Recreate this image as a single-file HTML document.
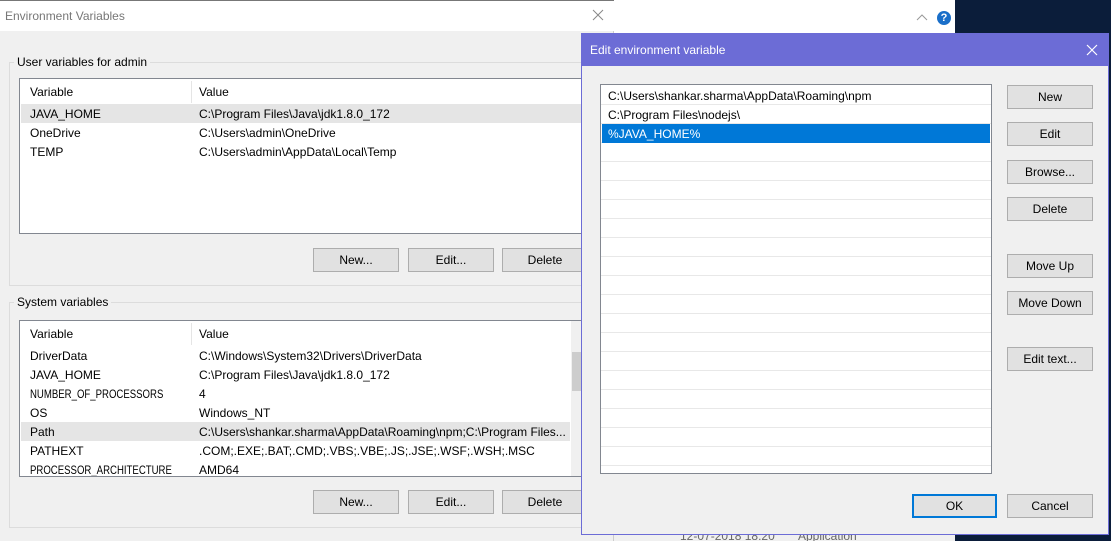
<!DOCTYPE html>
<html><head><meta charset="utf-8"><style>
*{box-sizing:border-box;margin:0;padding:0}
html,body{width:1111px;height:541px;overflow:hidden}
body{position:relative;background:#0b1d3a;font-family:"Liberation Sans",sans-serif;font-size:12px;color:#000}
.abs{position:absolute}
.btn{position:absolute;background:#e1e1e1;border:1px solid #adadad;text-align:center;line-height:22px;height:24px;font-size:12px}
.t{position:absolute;white-space:nowrap;line-height:19px;top:0}
.row{position:absolute;left:1px;right:1px;height:19px}
.n{transform:scaleX(.8);transform-origin:left}
</style></head><body>
<div class="abs" style="left:614px;top:0;width:341px;height:541px;background:#fff"></div>
<div class="abs" style="left:614px;top:520px;width:341px;height:21px;background:#f0f0f0"></div>
<div class="t" style="left:680px;top:527px;color:#666">12-07-2018 18:20</div>
<div class="t" style="left:798px;top:527px;color:#666">Application</div>
<svg class="abs" style="left:916px;top:14px" width="12" height="8"><path d="M1 6 L6 1 L11 6" stroke="#999" fill="none"/></svg>
<div class="abs" style="left:937px;top:11px;width:14px;height:14px;border-radius:50%;background:#1a6fc9;color:#fff;font-weight:bold;font-size:11px;text-align:center;line-height:14px">?</div>
<!-- left window -->
<div class="abs" style="left:0;top:0;width:614px;height:541px;background:#f0f0f0;border-right:1px solid #ccc"></div>
<div class="abs" style="left:0;top:0;width:614px;height:31px;background:#fff;border-top:1px solid #777"></div>
<div class="t" style="left:5px;top:7px;color:#777">Environment Variables</div>
<svg class="abs" style="left:592px;top:9px" width="12" height="12"><path d="M1 1L11 11M11 1L1 11" stroke="#888" stroke-width="1"/></svg>
<div class="abs" style="left:9px;top:62px;width:620px;height:224px;border:1px solid #dcdcdc"></div>
<div class="t" style="left:14px;top:53px;background:#f0f0f0;padding:0 3px">User variables for admin</div>
<div class="abs" style="left:19px;top:78px;width:600px;height:156px;background:#fff;border:1px solid #828790">
 <div class="abs" style="left:171px;top:2px;width:1px;height:22px;background:#e5e5e5"></div>
 <div class="t" style="left:10px;top:4px">Variable</div><div class="t" style="left:179px;top:4px">Value</div>
 <div class="row" style="top:25px;background:#e5e5e5"></div>
 <div class="t" style="left:10px;top:26px">JAVA_HOME</div><div class="t" style="left:179px;top:26px">C:\Program Files\Java\jdk1.8.0_172</div>
 <div class="t" style="left:10px;top:45px">OneDrive</div><div class="t" style="left:179px;top:45px">C:\Users\admin\OneDrive</div>
 <div class="t" style="left:10px;top:64px">TEMP</div><div class="t" style="left:179px;top:64px">C:\Users\admin\AppData\Local\Temp</div>
</div>
<div class="btn" style="left:313px;top:248px;width:86px">New...</div>
<div class="btn" style="left:408px;top:248px;width:86px">Edit...</div>
<div class="btn" style="left:502px;top:248px;width:86px">Delete</div>
<div class="abs" style="left:9px;top:302px;width:620px;height:226px;border:1px solid #dcdcdc"></div>
<div class="t" style="left:14px;top:293px;background:#f0f0f0;padding:0 3px">System variables</div>
<div class="abs" style="left:19px;top:320px;width:600px;height:157px;background:#fff;border:1px solid #828790;overflow:hidden">
 <div class="abs" style="left:171px;top:2px;width:1px;height:22px;background:#e5e5e5"></div>
 <div class="t" style="left:10px;top:4px">Variable</div><div class="t" style="left:179px;top:4px">Value</div>
 <div class="row" style="top:101px;background:#e5e5e5;right:48px"></div>
 <div class="t" style="left:10px;top:26px">DriverData</div><div class="t" style="left:179px;top:26px">C:\Windows\System32\Drivers\DriverData</div>
 <div class="t" style="left:10px;top:45px">JAVA_HOME</div><div class="t" style="left:179px;top:45px">C:\Program Files\Java\jdk1.8.0_172</div>
 <div class="t n" style="left:10px;top:64px">NUMBER_OF_PROCESSORS</div><div class="t" style="left:179px;top:64px">4</div>
 <div class="t" style="left:10px;top:83px">OS</div><div class="t" style="left:179px;top:83px">Windows_NT</div>
 <div class="t" style="left:10px;top:102px">Path</div><div class="t" style="left:179px;top:102px">C:\Users\shankar.sharma\AppData\Roaming\npm;C:\Program Files...</div>
 <div class="t" style="left:10px;top:121px">PATHEXT</div><div class="t" style="left:179px;top:121px">.COM;.EXE;.BAT;.CMD;.VBS;.VBE;.JS;.JSE;.WSF;.WSH;.MSC</div>
 <div class="t n" style="left:10px;top:140px">PROCESSOR_ARCHITECTURE</div><div class="t" style="left:179px;top:140px">AMD64</div>
 <div class="abs" style="left:551px;top:0;width:12px;height:157px;background:#f0f0f0"></div>
 <div class="abs" style="left:552px;top:31px;width:10px;height:39px;background:#cdcdcd"></div>
</div>
<div class="btn" style="left:313px;top:490px;width:86px">New...</div>
<div class="btn" style="left:408px;top:490px;width:86px">Edit...</div>
<div class="btn" style="left:502px;top:490px;width:86px">Delete</div>
<!-- dialog -->
<div class="abs" style="left:581px;top:33px;width:528px;height:502px;background:#f0f0f0;border:1px solid #6c6cd6"></div>
<div class="abs" style="left:581px;top:33px;width:528px;height:33px;background:#6c6cd6"></div>
<div class="t" style="left:590px;top:41px;color:#fff">Edit environment variable</div>
<svg class="abs" style="left:1086px;top:44px" width="12" height="12"><path d="M1 1L11 11M11 1L1 11" stroke="#fff" stroke-width="1.2"/></svg>
<div class="abs" style="left:600px;top:84px;width:392px;height:390px;background:#fff;border:1px solid #828790;background-image:repeating-linear-gradient(to bottom,transparent 0,transparent 18px,#e8e8e8 18px,#e8e8e8 19px);background-position:0 1px">
 <div class="row" style="top:39px;background:#0078d7;right:1px"></div>
 <div class="t" style="left:7px;top:2px">C:\Users\shankar.sharma\AppData\Roaming\npm</div>
 <div class="t" style="left:7px;top:21px">C:\Program Files\nodejs\</div>
 <div class="t" style="left:7px;top:40px;color:#fff">%JAVA_HOME%</div>
</div>
<div class="btn" style="left:1007px;top:85px;width:86px">New</div>
<div class="btn" style="left:1007px;top:122px;width:86px">Edit</div>
<div class="btn" style="left:1007px;top:160px;width:86px">Browse...</div>
<div class="btn" style="left:1007px;top:197px;width:86px">Delete</div>
<div class="btn" style="left:1007px;top:254px;width:86px">Move Up</div>
<div class="btn" style="left:1007px;top:291px;width:86px">Move Down</div>
<div class="btn" style="left:1007px;top:347px;width:86px">Edit text...</div>
<div class="btn" style="left:912px;top:494px;width:85px;border:2px solid #0078d7;line-height:20px">OK</div>
<div class="btn" style="left:1007px;top:494px;width:86px">Cancel</div>
</body></html>
